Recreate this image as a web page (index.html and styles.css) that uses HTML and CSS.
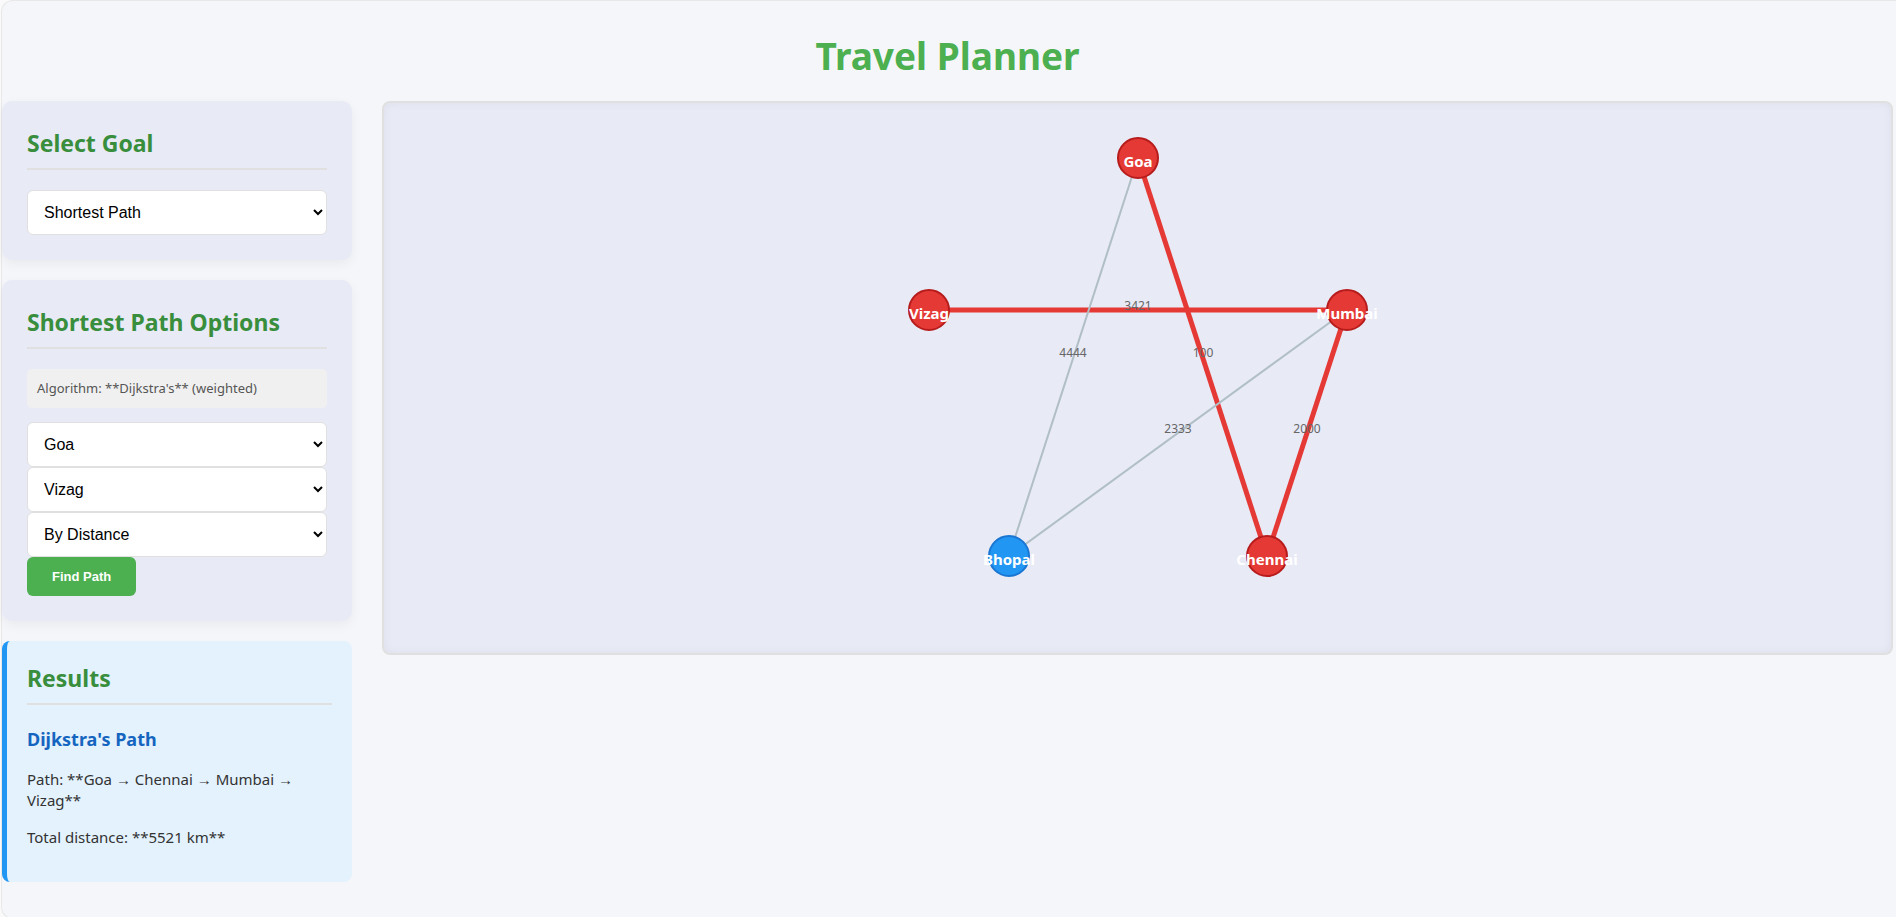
FILE: index.html
```html
<!DOCTYPE html>
<html lang="en">
<head>
<meta charset="utf-8">
<title>Travel Planner</title>
<link rel="stylesheet" href="styles.css">
</head>
<body>
<div class="planner">
  <h1 class="title">Travel Planner</h1>
  <div class="layout">
    <aside class="sidebar">
      <section class="card">
        <h2 class="heading" id="goal-title">Select Goal</h2>
        <select class="field" aria-labelledby="goal-title"><option>Shortest Path</option></select>
      </section>
      <section class="card">
        <h2 class="heading">Shortest Path Options</h2>
        <p class="note">Algorithm: **Dijkstra's** (weighted)</p>
        <select class="field" aria-label="From"><option>Goa</option></select>
        <select class="field" aria-label="To"><option>Vizag</option></select>
        <select class="field" aria-label="Metric"><option>By Distance</option></select>
        <button class="button" type="button">Find Path</button>
      </section>
      <section class="results">
        <h2 class="heading">Results</h2>
        <h3 class="subheading">Dijkstra's Path</h3>
        <p class="line">Path: **Goa → Chennai → Mumbai → Vizag**</p>
        <p class="line">Total distance: **5521 km**</p>
      </section>
    </aside>
    <main class="graph">
      <svg class="canvas" viewBox="0 0 1507 550" role="img" aria-label="City graph">
        <line class="edge on-path" x1="754" y1="55" x2="883" y2="453"/>
        <text class="weight" x="819" y="254">100</text>
        <line class="edge on-path" x1="883" y1="453" x2="963" y2="207"/>
        <text class="weight" x="923" y="330">2000</text>
        <line class="edge on-path" x1="963" y1="207" x2="545" y2="207"/>
        <text class="weight" x="754" y="207">3421</text>
        <line class="edge" x1="963" y1="207" x2="625" y2="453"/>
        <text class="weight" x="794" y="330">2333</text>
        <line class="edge" x1="625" y1="453" x2="754" y2="55"/>
        <text class="weight" x="689" y="254">4444</text>
        <circle class="node on-path" cx="754" cy="55" r="20"/>
        <text class="city" x="754" y="64">Goa</text>
        <circle class="node on-path" cx="963" cy="207" r="20"/>
        <text class="city" x="963" y="216">Mumbai</text>
        <circle class="node on-path" cx="883" cy="453" r="20"/>
        <text class="city" x="883" y="462">Chennai</text>
        <circle class="node" cx="625" cy="453" r="20"/>
        <text class="city" x="625" y="462">Bhopal</text>
        <circle class="node on-path" cx="545" cy="207" r="20"/>
        <text class="city" x="545" y="216">Vizag</text>
      </svg>
    </main>
  </div>
</div>
</body>
</html>
```
FILE: styles.css
```css
* {
  box-sizing: border-box;
}

html {
  overflow: hidden;
}

body {
  height: 100vh;
  margin: 0;
  padding: 0 0 0 1px;
  background: #fafafa;
  color: #333;
  font-family: "Segoe UI", "Noto Sans", "Open Sans", sans-serif;
  overflow: hidden;
}

.planner {
  min-height: 100vh;
  padding: 28px 3px 36px 0;
  background: #f5f6fa;
  border: 1px solid #e8e8e8;
  border-right: 0;
  border-radius: 12px 0 0 12px;
}

.title {
  margin: 0 0 18px;
  color: #4caf50;
  font-size: 37px;
  line-height: 54px;
  text-align: center;
}

.layout {
  display: flex;
  align-items: flex-start;
  gap: 30px;
}

.sidebar {
  display: flex;
  flex: 0 0 350px;
  flex-direction: column;
  gap: 20px;
}

.card {
  padding: 25px;
  background: #e8eaf6;
  border-radius: 10px;
  box-shadow: 0 4px 12px rgba(0, 0, 0, 0.05);
}

.heading {
  margin: 0 0 20px;
  padding-bottom: 8px;
  border-bottom: 2px solid #e0e0e0;
  color: #388e3c;
  font-size: 23px;
  line-height: 34px;
}

.note {
  margin: 0 0 14px;
  padding: 10px;
  background: #f0f0f0;
  border-radius: 5px;
  color: #555;
  font-size: 13px;
  line-height: 19px;
}

.field {
  display: block;
  width: 100%;
  height: 45px;
  padding: 12px;
  background-color: #fff;
  border: 1px solid #e0e0e0;
  border-radius: 6px;
  color: #000;
  font: 16px "Liberation Sans", Arial, sans-serif;
}

.button {
  display: block;
  height: 39px;
  padding: 0 25px;
  background: #4caf50;
  border: 0;
  border-radius: 6px;
  color: #fff;
  font: bold 13px "Liberation Sans", Arial, sans-serif;
}

.results {
  padding: 20px 20px 34px;
  background: #e3f2fd;
  border-left: 5px solid #2196f3;
  border-radius: 8px;
}

.subheading {
  margin: 0 0 16px;
  color: #1565c0;
  font-size: 18px;
  line-height: 28px;
}

.line {
  margin: 0 0 16px;
  font-size: 15px;
  line-height: 21px;
}

.line:last-child {
  margin-bottom: 0;
}

.graph {
  flex: 1;
  min-width: 0;
  background: #e8eaf6;
  border: 2px solid #e0e0e0;
  border-radius: 8px;
  box-shadow: inset 0 0 10px rgba(0, 0, 0, 0.05);
}

.canvas {
  display: block;
  width: 100%;
  height: 550px;
}

.edge {
  stroke: #b0bec5;
  stroke-width: 2;
}

.edge.on-path {
  stroke: #e53935;
  stroke-width: 5;
}

.weight {
  fill: #666;
  font-size: 12px;
  text-anchor: middle;
}

.node {
  fill: #2196f3;
  stroke: #1976d2;
  stroke-width: 2;
}

.node.on-path {
  fill: #e53935;
  stroke: #b71c1c;
}

.city {
  fill: #fff;
  font-size: 15px;
  font-weight: bold;
  text-anchor: middle;
}
```
